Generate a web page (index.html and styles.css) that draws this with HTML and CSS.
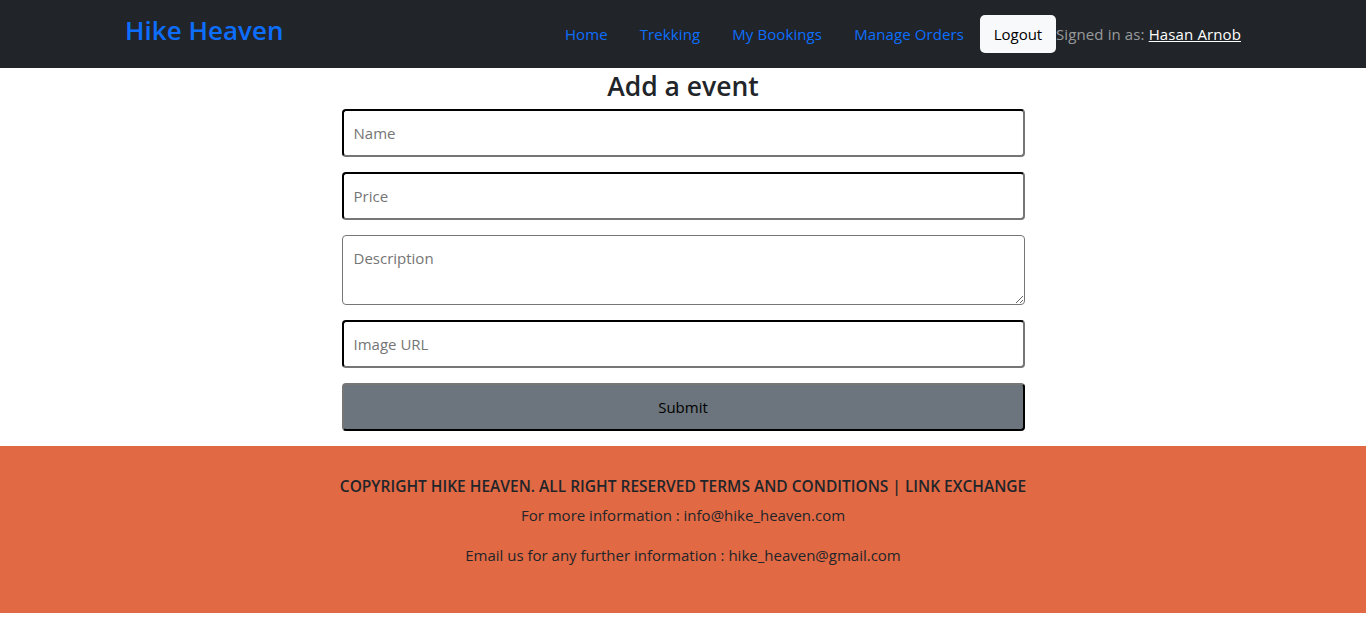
FILE: index.html
```html
<!DOCTYPE html>
<html lang="en">
<head>
<meta charset="utf-8">
<title>Hike Heaven</title>
<link rel="stylesheet" href="styles.css">
</head>
<body>
<header class="navbar">
  <div class="container nav-inner">
    <a class="brand" href="#">Hike Heaven</a>
    <nav class="nav-links">
      <a class="nav-link" href="#">Home</a>
      <a class="nav-link" href="#">Trekking</a>
      <a class="nav-link" href="#">My Bookings</a>
      <a class="nav-link" href="#">Manage Orders</a>
      <button class="btn-logout" type="button">Logout</button>
      <span class="signed">Signed in as: <a class="user" href="#">Hasan Arnob</a></span>
    </nav>
  </div>
</header>
<main class="main">
  <h2 class="title">Add a event</h2>
  <form class="event-form">
    <input class="field" type="text" placeholder="Name">
    <input class="field" type="text" placeholder="Price">
    <textarea class="area" placeholder="Description"></textarea>
    <input class="field" type="text" placeholder="Image URL">
    <button class="submit" type="button">Submit</button>
  </form>
</main>
<footer class="footer">
  <p class="copy">COPYRIGHT HIKE HEAVEN. ALL RIGHT RESERVED TERMS AND CONDITIONS | LINK EXCHANGE</p>
  <p class="info">For more information : info@hike_heaven.com</p>
  <p class="info2">Email us for any further information : hike_heaven@gmail.com</p>
</footer>
</body>
</html>
```
FILE: styles.css
```css
* { box-sizing: border-box; }
body {
  margin: 0;
  font-family: "Open Sans", "Noto Sans", sans-serif;
  font-size: 15px;
  color: #212529;
  background: #fff;
}
.navbar {
  background: #212529;
  height: 68px;
}
.container {
  width: 1140px;
  margin: 0 auto;
  padding: 0 12px;
}
.nav-inner {
  height: 68px;
  display: flex;
  align-items: center;
  justify-content: space-between;
}
.brand {
  color: #0d6efd;
  font-size: 26px;
  font-weight: 600;
  text-decoration: none;
  margin-top: -8px;
}
.nav-links {
  display: flex;
  align-items: center;
}
.nav-link {
  color: #0d6efd;
  text-decoration: none;
  padding: 8px 16px;
  font-size: 15px;
  letter-spacing: 0.1px;
}
.btn-logout {
  font-family: inherit;
  font-size: 15px;
  background: #f8f9fa;
  color: #000;
  border: 0;
  border-radius: 5px;
  height: 38px;
  width: 76px;
  padding: 0;
}
.signed {
  color: rgba(255,255,255,.55);
  font-size: 15px;
  letter-spacing: 0.12px;
}
.user {
  color: #fff;
  text-decoration: underline;
}
.main {
  width: 683px;
  margin: 0 auto;
}
.title {
  margin: 0 0 5px;
  text-align: center;
  font-size: 26.5px;
  font-weight: 600;
  line-height: 36px;
}
.event-form {
  display: flex;
  flex-direction: column;
  gap: 15px;
}
.field {
  height: 48px;
  border: 2px inset #767676;
  border-color: #212121 #767676 #767676 #212121;
  border-radius: 4px;
  padding: 0 10px;
  font-family: inherit;
  font-size: 15px;
  color: #212529;
}
.area {
  height: 70px;
  border: 1px solid #767676;
  border-radius: 4px;
  padding: 12px 11px;
  font-family: inherit;
  font-size: 15px;
  resize: vertical;
}
.field::placeholder, .area::placeholder { color: #757575; }
.submit {
  height: 48px;
  background: #6c757d;
  border: 2px outset #767676;
  border-color: #767676 #1e1e1e #1e1e1e #767676;
  border-radius: 4px;
  font-family: inherit;
  font-size: 15px;
  color: #000;
}
.footer {
  margin-top: 15px;
  background: #e16944;
  height: 167px;
  padding-top: 28px;
  text-align: center;
  color: #212529;
}
.footer p { margin: 0; line-height: 24px; }
.copy { font-weight: 600; font-size: 15.5px; }
.info { margin-top: 5px !important; }
.info2 { margin-top: 16px !important; }
```
